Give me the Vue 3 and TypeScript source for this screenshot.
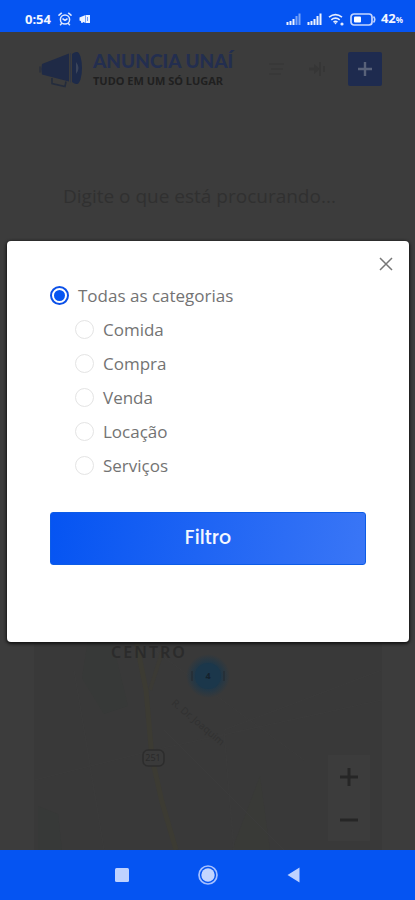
<script setup lang="ts">
import { ref } from 'vue'

interface Category {
  id: string
  label: string
  nested: boolean
}

const categories: Category[] = [
  { id: 'todas', label: 'Todas as categorias', nested: false },
  { id: 'comida', label: 'Comida', nested: true },
  { id: 'compra', label: 'Compra', nested: true },
  { id: 'venda', label: 'Venda', nested: true },
  { id: 'locacao', label: 'Locação', nested: true },
  { id: 'servicos', label: 'Serviços', nested: true },
]

const selected = ref('todas')
const open = ref(true)
</script>

<template>
  <div class="screen">
    <div class="status">
      <div class="status-group">
        <span class="time">0:54</span>
        <svg width="14" height="14" viewBox="0 0 14 14" fill="none" stroke="#dfe8ff" stroke-width="1.5" stroke-linecap="round">
          <circle cx="7" cy="7.500" r="4.600" />
          <path d="M5 7l2 1.300L9 7M1 3.200L3.400 1.200M13 3.200L10.600 1.200M3.600 11.500L2.500 12.800M10.400 11.500l1.100 1.300" />
        </svg>
        <svg width="12" height="10" viewBox="0 0 12 10" fill="#eef3ff">
          <path d="M0.500 3.500L6 1.200v7.600L0.500 6.500zM6.500 1h4.500v8H6.500zM2 7l2 0.600v1.200H2z" />
          <path d="M8.500 3v4" stroke="#6c98f8" />
        </svg>
      </div>
      <div class="status-group right">
        <svg width="16" height="12" viewBox="0 0 16 12" fill="#eef3ff">
          <path d="M0.500 9h2v3h-2zM3.500 8h2v4h-2zM6.500 6h2v6h-2z" />
          <path d="M9.500 3h2v9h-2zM12.500 0.500h2V12h-2z" opacity=".5" />
        </svg>
        <svg width="16" height="12" viewBox="0 0 16 12" fill="#eef3ff">
          <path d="M0.500 9h2v3h-2zM3.500 8h2v4h-2zM6.500 6h2v6h-2zM9.500 3h2v9h-2zM12.500 0.500h2V12h-2z" />
        </svg>
        <svg width="17" height="13" viewBox="0 0 17 13" fill="none" stroke="#e4ecff" stroke-width="1.600">
          <path d="M1 4.200Q7.500-1 14 4.200M3.300 6.800Q7.500 3.400 11.700 6.800M5.500 9.200Q7.500 7.600 9.500 9.200" />
          <path d="M6 9.500h3l-1.500 2z" fill="#e4ecff" stroke="none" />
          <circle cx="14" cy="11" r="1.600" fill="#e4ecff" stroke="none" />
        </svg>
        <svg width="26" height="13" viewBox="0 0 26 13" fill="none">
          <rect x="1" y="1" width="21" height="11" rx="3" stroke="#c5d6ff" stroke-width="1.700" />
          <path d="M23.500 3.500q2.500 3 0 6" stroke="#c5d6ff" stroke-width="1.600" />
          <rect x="4" y="3.500" width="7" height="6" rx="1" fill="#fff" />
        </svg>
        <span class="battery">42<small>%</small></span>
      </div>
    </div>

    <div class="page">
      <header class="header">
        <a class="brand" href="#">
          <svg width="44" height="38" viewBox="0 0 44 38">
            <path d="M3 14L30 3.500v28L3 24.500q-1.500-5 0-10.500z" fill="#1f2a46" />
            <path d="M1 16.500v6" stroke="#2a2f3c" stroke-width="1.500" />
            <path d="M31.500 3v29.500" stroke="#303645" />
            <ellipse cx="38" cy="18" rx="5" ry="16" fill="#1d2a49" />
            <path d="M33 4q2-2 5-2v32q-3 0-5-2z" fill="#1d2a49" />
            <path d="M37 12q5 6 0 12z" fill="#3a445a" />
            <path d="M13 28v5.500l13 3 1-5" fill="none" stroke="#242c3d" stroke-width="1.600" />
          </svg>
          <span class="brand-text">
            <strong>ANUNCIA UNAÍ</strong>
            <span>TUDO EM UM SÓ LUGAR</span>
          </span>
        </a>
        <div class="actions">
          <button class="ghost" type="button" aria-label="Menu">
            <svg width="18" height="14" viewBox="0 0 18 14" fill="none" stroke="#373737" stroke-width="1.500">
              <path d="M1 2h15M3 7h12M1 12h12" />
            </svg>
          </button>
          <button class="ghost" type="button" aria-label="Entrar">
            <svg width="18" height="16" viewBox="0 0 18 16" fill="#363636">
              <path d="M1 6.500h5V3l6 5-6 5V9.500H1zM11 1h2v14h-2zM15 5h2v6h-2z" />
            </svg>
          </button>
          <button class="add" type="button" aria-label="Anunciar">
            <svg width="14" height="14" viewBox="0 0 14 14" stroke="#596279" stroke-width="2.400">
              <path d="M7 0v14M0 7h14" />
            </svg>
          </button>
        </div>
      </header>

      <input class="search" type="search" placeholder="Digite o que está procurando..." aria-label="Buscar" />

      <section class="map" aria-label="Mapa">
        <svg class="map-art" viewBox="0 0 348 410" preserveAspectRatio="xMidYMax slice">
          <defs>
            <radialGradient id="glow">
              <stop offset="0.500" stop-color="#1b374b" />
              <stop offset="1" stop-color="#1b374b" stop-opacity="0" />
            </radialGradient>
          </defs>
          <rect width="348" height="410" fill="#393939" />
          <path d="M54 200l24 0 16 66-24 8-22-36z" fill="#373938" />
          <path d="M4 366l20 8 4 36H4z" fill="#373938" />
          <path d="M198 410l28-74 10 74z" fill="#393a37" />
          <g fill="none" stroke="#3b3b3b" stroke-width="1">
            <path d="M0 340l120-30 228-50M70 410l-30-180M200 410l-10-120 158-60M130 290l120 120M120 210l150 110" />
          </g>
          <path d="M100 190l12 60 6 68 10 44 14 48" fill="none" stroke="#3c3b33" stroke-width="5" />
          <path d="M128 212l-12 38" fill="none" stroke="#3b3a35" stroke-width="4" />
          <circle cx="174" cy="236" r="22" fill="url(#glow)" />
          <circle cx="174" cy="236" r="13" fill="#1b374b" />
          <path d="M158 231v10M190 231v10" stroke="#262e36" stroke-width="1.500" />
          <text x="174" y="239" class="pin-text">4</text>
          <text x="115" y="218" class="district">CENTRO</text>
          <text transform="translate(137 264) rotate(40)" class="street">R. Dr. Joaquim</text>
          <rect x="109" y="310" width="21" height="16" rx="5" fill="#3a3a3a" stroke="#2d2d2d" stroke-width="1.500" />
          <text x="119" y="321" class="road">251</text>
        </svg>
        <div class="zoom">
          <button type="button" aria-label="Aproximar">
            <svg width="20" height="20" viewBox="0 0 20 20" stroke="#262626" stroke-width="3"><path d="M10 1v18M1 10h18" /></svg>
          </button>
          <button type="button" aria-label="Afastar">
            <svg width="20" height="20" viewBox="0 0 20 20" stroke="#262626" stroke-width="3"><path d="M1 10h18" /></svg>
          </button>
        </div>
      </section>

      <div v-if="open" class="overlay">
        <form class="modal" role="dialog" aria-label="Categorias" @submit.prevent="open = false">
          <button class="close" type="button" aria-label="Fechar" @click="open = false">
            <svg width="14" height="14" viewBox="0 0 14 14" stroke="#777" stroke-width="1.500"><path d="M1 1l12 12M13 1L1 13" /></svg>
          </button>
          <div class="options">
            <label v-for="c in categories" :key="c.id" class="option" :class="{ nested: c.nested }" :for="c.id">
              <input :id="c.id" v-model="selected" type="radio" name="categoria" :value="c.id" />
              <span>{{ c.label }}</span>
            </label>
          </div>
          <button class="submit" type="submit">Filtro</button>
        </form>
      </div>
    </div>

    <nav class="nav">
      <button type="button" aria-label="Recentes">
        <svg width="14" height="14" viewBox="0 0 14 14"><rect width="14" height="14" rx="1.500" fill="#bfd2ff" /></svg>
      </button>
      <button type="button" aria-label="Início">
        <svg width="20" height="20" viewBox="0 0 20 20">
          <circle cx="10" cy="10" r="9" fill="none" stroke="#a6c0ff" stroke-width="1.700" />
          <circle cx="10" cy="10" r="6.700" fill="#c3d5ff" />
        </svg>
      </button>
      <button type="button" aria-label="Voltar">
        <svg width="13" height="16" viewBox="0 0 13 16"><path d="M0.500 8L12.500 0.500v15z" fill="#bfd2ff" /></svg>
      </button>
    </nav>
  </div>
</template>

<style>
body {
  margin: 0;
}
</style>

<style scoped>
.screen {
  display: flex;
  flex-direction: column;
  min-height: 100vh;
  background: #3c3c3c;
  font-family: "Open Sans", "Noto Sans", sans-serif;
}
button {
  display: grid;
  place-items: center;
  padding: 0;
  border: 0;
  background: none;
  font: inherit;
  cursor: pointer;
}
svg {
  display: block;
}
.status {
  display: flex;
  align-items: center;
  justify-content: space-between;
  box-sizing: border-box;
  height: 32px;
  padding: 6px 12px 0 25px;
  background: #0554f2;
  color: #f2f6ff;
}
.status-group {
  display: flex;
  align-items: center;
  gap: 7px;
}
.status-group.right {
  gap: 5px;
}
.time,
.battery {
  font: 700 13px/16px "Noto Sans", sans-serif;
}
.battery small {
  font-size: 8px;
}
.page {
  position: relative;
  display: flex;
  flex: 1;
  flex-direction: column;
}
.header {
  display: flex;
  align-items: center;
  justify-content: space-between;
  padding: 17px 33px 17px 39px;
}
.brand {
  display: flex;
  align-items: center;
  gap: 10px;
  text-decoration: none;
}
.brand-text {
  display: flex;
  flex-direction: column;
  white-space: nowrap;
}
.brand-text strong {
  color: #232e4f;
  font: 900 19px/24px Lato, sans-serif;
}
.brand-text span {
  color: #202020;
  font: 700 11px/16px "Noto Sans", sans-serif;
}
.actions {
  display: flex;
  align-items: center;
  gap: 22px;
}
.add {
  width: 34px;
  height: 34px;
  border-radius: 2px;
  background: #1e2b4f;
}
.search {
  height: 60px;
  margin: 60px 33px 0;
  padding: 0 30px;
  border: 0;
  outline: 0;
  background: transparent;
  color: #2c2c2c;
  font: 19px/28px "Open Sans", sans-serif;
}
.search::placeholder {
  color: #303030;
  opacity: 1;
}
.map {
  position: relative;
  flex: 1;
  min-height: 410px;
  margin: 214px 33px 0 34px;
  overflow: hidden;
}
.map-art {
  position: absolute;
  inset: 0;
  width: 100%;
  height: 100%;
}
.map-art text {
  font-family: "Noto Sans", sans-serif;
  text-anchor: middle;
}
.map-art .district {
  fill: #2b2b2b;
  font-size: 16px;
  font-weight: 600;
  letter-spacing: 2px;
}
.map-art .pin-text {
  fill: #14212c;
  font-size: 9px;
  font-weight: 700;
}
.map-art .street {
  fill: #313131;
  font-size: 10px;
  text-anchor: start;
}
.map-art .road {
  fill: #2a2a2a;
  font-size: 9px;
}
.zoom {
  position: absolute;
  right: 12px;
  bottom: 9px;
  display: grid;
  background: #3c3c3c;
}
.zoom button {
  width: 42px;
  height: 43px;
}
.overlay {
  position: absolute;
  inset: 0;
  display: flex;
  align-items: center;
  padding: 0 6px 0 7px;
}
.modal {
  position: relative;
  flex: 1;
  padding: 38px 43px 77px;
  border-radius: 4px;
  background: #fff;
  box-shadow: 0 1px 3px 1px #151515;
}
.close {
  position: absolute;
  top: 11px;
  right: 11px;
  width: 24px;
  height: 24px;
}
.options {
  display: flex;
  flex-direction: column;
  margin-bottom: 29px;
}
.option {
  display: flex;
  align-items: center;
  gap: 9px;
  height: 34px;
  color: #737373;
  font-size: 17px;
  line-height: 24px;
  cursor: pointer;
}
.option.nested {
  padding-left: 25px;
}
.option input {
  display: grid;
  place-items: center;
  box-sizing: border-box;
  width: 19px;
  height: 19px;
  margin: 0;
  border: 1px solid #e4e4e4;
  border-radius: 50%;
  background: #fff;
  appearance: none;
}
.option input:checked {
  border: 2px solid #0b50e8;
}
.option input:checked::before {
  width: 11px;
  height: 11px;
  border-radius: 50%;
  background: #0554f2;
  content: "";
}
.submit {
  box-sizing: border-box;
  width: 100%;
  height: 53px;
  border: 1px solid #0d5ce6;
  border-radius: 3px;
  background: linear-gradient(100deg, #0554f2, #3a76f6);
  color: #f4f8ff;
  font: 500 19px/24px Poppins, Lato, sans-serif;
}
.nav {
  display: flex;
  align-items: center;
  justify-content: center;
  gap: 66px;
  height: 50px;
  background: #0554f2;
}
.nav button {
  width: 20px;
  height: 20px;
}
</style>
